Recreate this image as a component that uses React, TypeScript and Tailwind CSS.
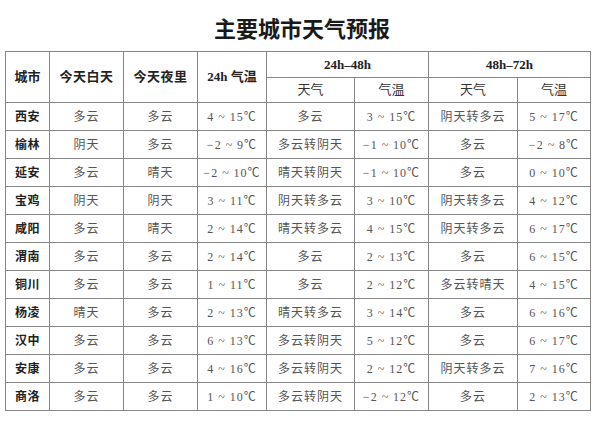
import React from 'react';

type Row = [string, string, string, string, string, string, string, string];

const ROWS: Row[] = [
  ['西安', '多云', '多云', '4 ~ 15℃', '多云', '3 ~ 15℃', '阴天转多云', '5 ~ 17℃'],
  ['榆林', '阴天', '多云', '−2 ~ 9℃', '多云转阴天', '−1 ~ 10℃', '多云', '−2 ~ 8℃'],
  ['延安', '多云', '晴天', '−2 ~ 10℃', '晴天转阴天', '−1 ~ 10℃', '多云', '0 ~ 10℃'],
  ['宝鸡', '阴天', '阴天', '3 ~ 11℃', '阴天转多云', '3 ~ 10℃', '阴天转多云', '4 ~ 12℃'],
  ['咸阳', '多云', '晴天', '2 ~ 14℃', '晴天转多云', '4 ~ 15℃', '阴天转多云', '6 ~ 17℃'],
  ['渭南', '多云', '多云', '2 ~ 14℃', '多云', '2 ~ 13℃', '多云', '6 ~ 15℃'],
  ['铜川', '多云', '多云', '1 ~ 11℃', '多云', '2 ~ 12℃', '多云转晴天', '4 ~ 15℃'],
  ['杨凌', '晴天', '多云', '2 ~ 13℃', '晴天转多云', '3 ~ 14℃', '多云', '6 ~ 16℃'],
  ['汉中', '多云', '多云', '6 ~ 13℃', '多云转阴天', '5 ~ 12℃', '多云', '6 ~ 17℃'],
  ['安康', '多云', '多云', '4 ~ 16℃', '多云转阴天', '2 ~ 12℃', '阴天转多云', '7 ~ 16℃'],
  ['商洛', '多云', '多云', '1 ~ 10℃', '多云转阴天', '−2 ~ 12℃', '多云', '2 ~ 13℃'],
];

const WIDTHS = [44, 74, 74, 69, 88, 74, 89, 73];

const font = { fontFamily: '"Liberation Serif", "Noto Sans CJK SC", serif' };

const cell = 'border border-[#858585] text-center align-middle p-0';

export default function App() {
  return (
    <div className="w-[600px] h-[424px] bg-white overflow-hidden" style={font}>
      <div className="h-[51px] pt-[16px] pl-[4px] text-center text-[22px] leading-[28px] font-bold text-[#1a1a1a]">
        主要城市天气预报
      </div>
      <table className="ml-[5px] border-collapse table-fixed w-[585px]">
        <colgroup>
          {WIDTHS.map((w, i) => (
            <col key={i} style={{ width: w }} />
          ))}
        </colgroup>
        <thead className="text-[13px] font-bold text-[#222]">
          <tr className="h-[26px]">
            <th rowSpan={2} className={cell}>城市</th>
            <th rowSpan={2} className={`${cell} tracking-[0.5px]`}>今天白天</th>
            <th rowSpan={2} className={`${cell} tracking-[0.5px]`}>今天夜里</th>
            <th rowSpan={2} className={cell}>24h 气温</th>
            <th colSpan={2} className={cell}>24h–48h</th>
            <th colSpan={2} className={cell}>48h–72h</th>
          </tr>
          <tr className="h-[25px]">
            <th className={`${cell} font-normal text-[#333]`}>天气</th>
            <th className={`${cell} font-normal text-[#333]`}>气温</th>
            <th className={`${cell} font-normal text-[#333]`}>天气</th>
            <th className={`${cell} font-normal text-[#333]`}>气温</th>
          </tr>
        </thead>
        <tbody>
          {ROWS.map((r) => (
            <tr key={r[0]} className="h-[28px]">
              {r.map((v, i) => (
                <td
                  key={i}
                  className={
                    i === 0
                      ? `${cell} text-[12px] font-bold text-[#222] tracking-[0.5px]`
                      : `${cell} text-[12px] text-[#555] tracking-[1px]`
                  }
                >
                  {v}
                </td>
              ))}
            </tr>
          ))}
        </tbody>
      </table>
    </div>
  );
}
